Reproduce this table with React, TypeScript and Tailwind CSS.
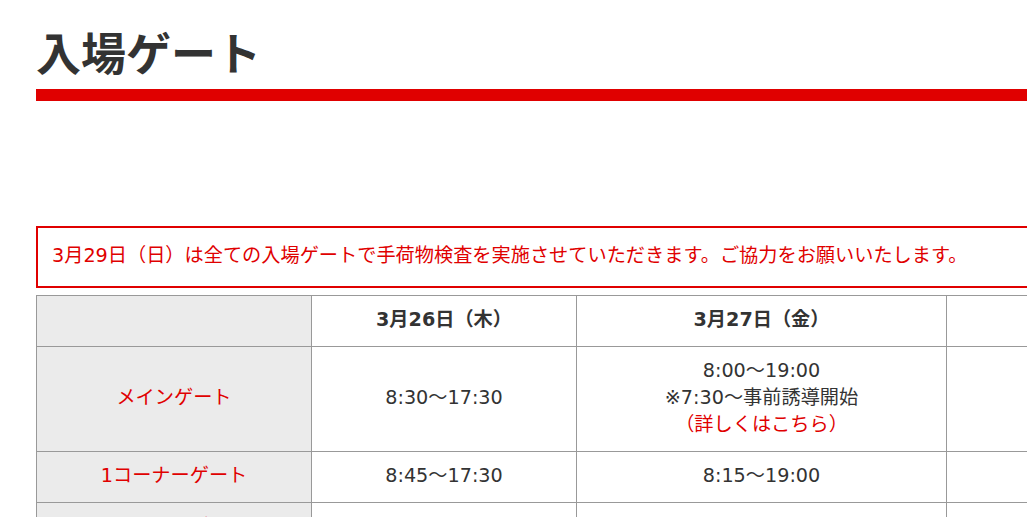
import type { FC } from 'react';

interface GateRow {
  name: string;
  times: React.ReactNode[];
}

const days = ['3月26日（木）', '3月27日（金）', '3月28日（土）', '3月29日（日）'];

const rows: GateRow[] = [
  {
    name: 'メインゲート',
    times: [
      '8:30〜17:30',
      <>
        8:00〜19:00
        <br />
        ※7:30〜事前誘導開始
        <br />
        <span className="text-[#e00000]">（詳しくはこちら）</span>
      </>,
      '',
      '',
    ],
  },
  { name: '1コーナーゲート', times: ['8:45〜17:30', '8:15〜19:00', '', ''] },
  { name: '2コーナーゲート', times: ['8:45〜17:30', '8:15〜19:00', '', ''] },
];

const App: FC = () => {
  return (
    <div
      className="w-[1027px] h-[517px] overflow-hidden bg-white text-[#333]"
      style={{ fontFamily: '"DejaVu Sans", "Noto Sans CJK JP", sans-serif' }}
    >
      <div className="w-[1700px] pl-[36px] pt-[29px]">
        <h1
          className="text-[45px] leading-[45px] font-bold text-[#333] mb-[15px]"
          style={{ fontFamily: '"Noto Sans CJK JP", sans-serif' }}
        >
          入場ゲート
        </h1>
        <div className="h-[12px] bg-[#e00000]" />

        <div className="mt-[125px] w-[1650px] border-2 border-[#e00000] px-[14px] pt-[14px] pb-[17px] text-[19.2px] leading-[27px] text-[#e00000]">
          3月29日（日）は全ての入場ゲートで手荷物検査を実施させていただきます。ご協力をお願いいたします。
        </div>

        <table className="mt-[7px] w-[1650px] table-fixed border-collapse text-[19.2px] leading-[27px]">
          <colgroup>
            <col className="w-[275px]" />
            <col className="w-[265px]" />
            <col className="w-[370px]" />
            <col className="w-[370px]" />
            <col className="w-[370px]" />
          </colgroup>
          <thead>
            <tr>
              <th className="border border-[#999] bg-[#ebebeb] pt-[10px] pb-[13px]" />
              {days.map((d) => (
                <th key={d} className="border border-[#999] pt-[10px] pb-[13px] font-bold text-center text-[#333]">
                  {d}
                </th>
              ))}
            </tr>
          </thead>
          <tbody>
            {rows.map((row) => (
              <tr key={row.name}>
                <td className="border border-[#999] bg-[#ebebeb] pt-[10px] pb-[13px] text-center text-[#e00000]">
                  {row.name}
                </td>
                {row.times.map((t, i) => (
                  <td key={i} className="border border-[#999] pt-[10px] pb-[13px] text-center">
                    {t}
                  </td>
                ))}
              </tr>
            ))}
          </tbody>
        </table>
      </div>
    </div>
  );
};

export default App;
